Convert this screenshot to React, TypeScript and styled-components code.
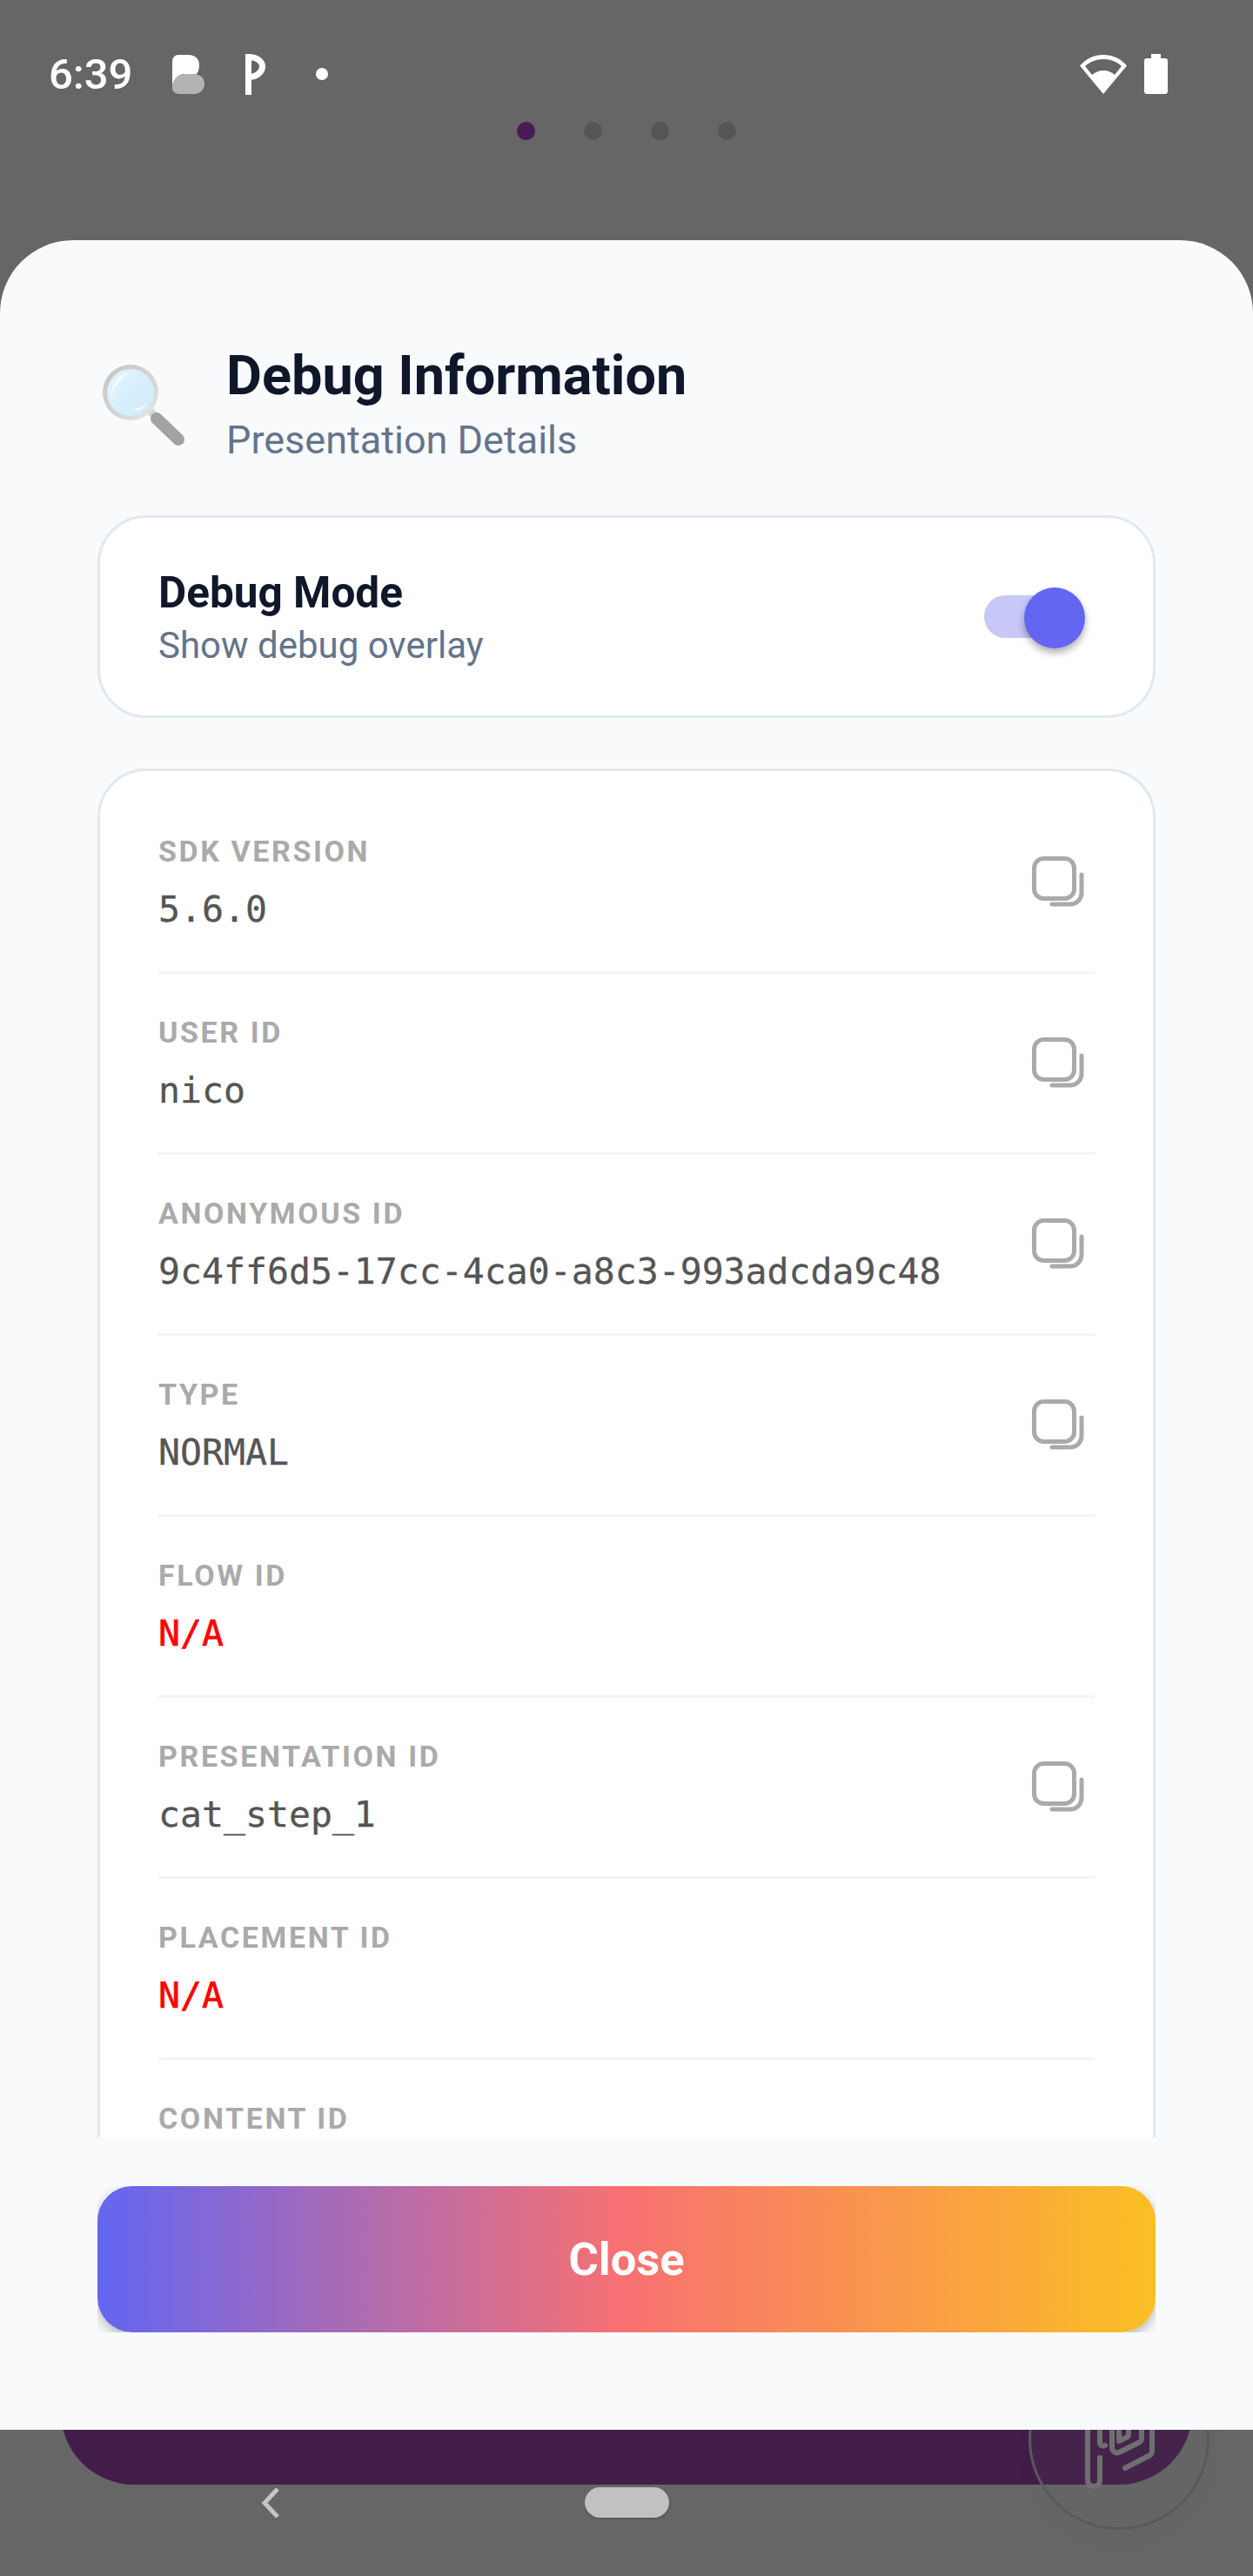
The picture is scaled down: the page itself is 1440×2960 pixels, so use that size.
import styled, { createGlobalStyle } from "styled-components";

const GlobalStyle = createGlobalStyle`
  html, body {
    margin: 0;
    padding: 0;
    background: #666666;
    font-family: Roboto, "Liberation Sans", sans-serif;
  }
`;

const Screen = styled.div`
  position: relative;
  display: flex;
  flex-direction: column;
  width: 1440px;
  height: 2960px;
  background: #666666;
  overflow: hidden;
`;

const StatusBar = styled.div`
  display: flex;
  align-items: center;
  justify-content: space-between;
  height: 60px;
  padding: 55px 98px 0 56px;
`;

const StatusLeft = styled.div`
  display: flex;
  align-items: center;
`;

const Clock = styled.span`
  width: 142px;
  font-size: 49px;
  font-weight: 500;
  color: #ffffff;
`;

const StatusDot = styled.span`
  width: 14px;
  height: 14px;
  margin-left: 58px;
  border-radius: 50%;
  background: #ffffff;
`;

const ParkingSlot = styled.span`
  display: flex;
  margin-left: 47px;
`;

const StatusRight = styled.div`
  display: flex;
  align-items: center;
  gap: 20px;
`;

const PagerDots = styled.div`
  display: flex;
  justify-content: center;
  gap: 56px;
  margin-top: 25px;
  padding-right: 1px;
`;

const PagerDot = styled.span<{ $active?: boolean }>`
  width: 21px;
  height: 21px;
  border-radius: 50%;
  background: ${(p) => (p.$active ? "#4a1a55" : "#555555")};
`;

const Sheet = styled.div`
  position: relative;
  z-index: 2;
  display: flex;
  flex-direction: column;
  height: 2516px;
  margin-top: 115px;
  padding: 0 112px;
  background: #f8fafc;
  border-radius: 84px 84px 0 0;
  box-sizing: border-box;
`;

const Header = styled.div`
  display: flex;
  align-items: center;
  margin-top: 120px;
`;

const HeaderIcon = styled.div`
  display: flex;
  width: 142px;
  padding: 6px 0 0 6px;
`;

const Title = styled.div`
  font-size: 63px;
  font-weight: 700;
  line-height: 72px;
  color: #0f172a;
`;

const Subtitle = styled.div`
  margin-top: 12px;
  font-size: 45px;
  line-height: 52px;
  color: #64748b;
`;

const Card = styled.div`
  background: #ffffff;
  border: 3px solid #e2e8f0;
  border-radius: 56px;
`;

const ToggleCard = styled(Card)`
  display: flex;
  align-items: center;
  justify-content: space-between;
  height: 233px;
  margin-top: 60px;
  padding: 0 86px 0 67px;
  box-sizing: border-box;
`;

const ToggleText = styled.div`
  padding-top: 5px;
`;

const ToggleTitle = styled.div`
  font-size: 49.5px;
  font-weight: 700;
  line-height: 62px;
  color: #0f172a;
`;

const ToggleHint = styled.div`
  font-size: 42px;
  line-height: 60px;
  color: #64748b;
`;

const Switch = styled.div`
  position: relative;
  width: 108px;
  height: 49px;
  border-radius: 25px;
  background: #c7c8f8;
`;

const SwitchThumb = styled.span`
  position: absolute;
  top: -9px;
  right: -8px;
  width: 70px;
  height: 70px;
  border-radius: 50%;
  background: #6366f1;
  box-shadow: 0 5px 9px rgba(0, 0, 0, 0.32);
`;

const ListClip = styled.div`
  flex: 1;
  min-height: 0;
  margin-top: 58px;
  overflow: hidden;
`;

const ListCard = styled(Card)`
  padding: 25px 67px 0;
`;

const Row = styled.div`
  display: flex;
  align-items: center;
  justify-content: space-between;
  height: 208px;
  border-bottom: 3px solid #f1f5f9;
  box-sizing: border-box;
`;

const RowText = styled.div`
  padding-bottom: 2px;
`;

const RowLabel = styled.div`
  font-size: 34px;
  font-weight: 700;
  line-height: 44px;
  letter-spacing: 2.6px;
  color: #aaaaaa;
`;

const RowValue = styled.div<{ $missing?: boolean }>`
  margin-top: 20px;
  font-family: "DejaVu Sans Mono", "Liberation Mono", monospace;
  font-size: 41.5px;
  line-height: 50px;
  color: ${(p) => (p.$missing ? "#ff0000" : "#555555")};
  -webkit-text-stroke: ${(p) => (p.$missing ? "0.6px #ff0000" : "0.3px #555555")};
`;

const CopyButton = styled.div`
  display: flex;
  margin-right: 12px;
`;

const Footer = styled.div`
  height: 336px;
  padding-top: 56px;
  box-sizing: border-box;
`;

const CloseClip = styled.div`
  height: 168px;
  overflow: hidden;
`;

const CloseButton = styled.div`
  display: flex;
  align-items: center;
  justify-content: center;
  height: 168px;
  border-radius: 40px;
  background: linear-gradient(90deg, #6366f1 0%, #f87171 50%, #fbbf24 100%);
  box-shadow: 0 5px 14px rgba(0, 0, 0, 0.28);
  font-size: 52.5px;
  font-weight: 700;
  color: #ffffff;
`;

const PeekBar = styled.div`
  height: 103px;
  margin: -40px 70px 0;
  background: #421d4a;
  border-radius: 0 0 84px 84px;
`;

const NavBar = styled.div`
  position: relative;
  display: flex;
  justify-content: center;
  padding-top: 3px;
`;

const NavBack = styled.div`
  position: absolute;
  top: 4px;
  left: 299px;
  display: flex;
`;

const NavPill = styled.div`
  width: 97px;
  height: 35px;
  border-radius: 18px;
  background: #c1c1c1;
  box-shadow: 0 1px 3px rgba(0, 0, 0, 0.25);
`;

const Fan = styled.div`
  position: absolute;
  z-index: 1;
  left: 1182px;
  top: 2699px;
  width: 208px;
  height: 208px;
  border: 3px solid #5a5a5a;
  border-radius: 50%;
  box-sizing: border-box;
  background: rgba(102, 102, 102, 0.1);
  box-shadow: 0 14px 30px rgba(0, 0, 0, 0.02);
`;

const FanLogo = styled.svg`
  display: block;
`;

const CopyIcon = () => (
  <svg width="60" height="60" viewBox="0 0 60 60" fill="none" stroke="#aaaaaa" strokeWidth="5" strokeLinecap="round">
    <rect x="2.5" y="2.500" width="46" height="46" rx="11" />
    <path d="M57 21v21a13 13 0 0 1-13 13H23" />
  </svg>
);

const Magnifier = () => (
  <svg width="96" height="96" viewBox="0 0 96 96" fill="none">
    <defs>
      <linearGradient id="lens" x1="0" y1="0" x2="1" y2="1">
        <stop offset="0" stopColor="#e3f4fc" />
        <stop offset="1" stopColor="#cdebf9" />
      </linearGradient>
      <linearGradient id="rim" x1="0" y1="0" x2="1" y2="1">
        <stop offset="0" stopColor="#c4c4c4" />
        <stop offset="0.6" stopColor="#d6d6d6" />
        <stop offset="1" stopColor="#e8e8e8" />
      </linearGradient>
    </defs>
    <path d="M53 52l7 7" stroke="#d5d5d5" strokeWidth="9" />
    <path d="M62 62l25 24" stroke="#a3a3a3" strokeWidth="14" strokeLinecap="round" />
    <circle cx="32" cy="32" r="32" fill="url(#rim)" />
    <circle cx="32" cy="32" r="27" fill="url(#lens)" />
    <path d="M10 37C8 23 18 10 31 9c-9 5-16 15-21 28z" fill="#f2fafe" />
    <path d="M36 51c6-1 11-3 15-8-2 6-7 10-13 10z" fill="#f2fafe" />
  </svg>
);

const ThemeGlyph = () => (
  <svg width="37" height="45" viewBox="0 0 37 45">
    <path d="M0 38V7a7 7 0 0 1 7-7h11c9 0 13 5 13 12 0 4-1 7-3 10H14c-8 0-14 8-14 16z" fill="#ffffff" />
    <path d="M0 38c0-8 5-15 14-16h11c7 0 12 5 12 11 0 7-5 12-12 12H8c-5 0-8-3-8-7z" fill="#b3b3b3" />
  </svg>
);

const ParkingGlyph = () => (
  <svg width="23" height="47" viewBox="0 0 23 47" fill="none" stroke="#ffffff" strokeWidth="7">
    <path d="M3.500 0v47M3.500 3.500c10 0 16 5 16 11s-6 12-16 12" />
  </svg>
);

const WifiGlyph = () => (
  <svg width="54" height="45" viewBox="0 0 54 45">
    <path d="M27 45L0 12.5C7 4.500 16.500 0 27 0s20 4.500 27 12.500z" fill="#ffffff" />
    <path d="M27 5c-8 0-15.500 3-21 8l8 10c3.500-3 8-5 13-5s9.500 2 13 5l8-10c-5.500-5-13-8-21-8z" fill="#666666" />
  </svg>
);

const BatteryGlyph = () => (
  <svg width="27" height="46" viewBox="0 0 27 46">
    <path d="M8 0h11v5h5a3 3 0 0 1 3 3v35a3 3 0 0 1-3 3H3a3 3 0 0 1-3-3V8a3 3 0 0 1 3-3h5z" fill="#ffffff" />
  </svg>
);

const rows = [
  { label: "SDK VERSION", value: "5.6.0", copy: true },
  { label: "USER ID", value: "nico", copy: true },
  { label: "ANONYMOUS ID", value: "9c4ff6d5-17cc-4ca0-a8c3-993adcda9c48", copy: true },
  { label: "TYPE", value: "NORMAL", copy: true },
  { label: "FLOW ID", value: "N/A", copy: false },
  { label: "PRESENTATION ID", value: "cat_step_1", copy: true },
  { label: "PLACEMENT ID", value: "N/A", copy: false },
  { label: "CONTENT ID", value: "N/A", copy: false },
];

const App = () => {
  return (
    <Screen>
      <GlobalStyle />
      <StatusBar>
        <StatusLeft>
          <Clock>6:39</Clock>
          <ThemeGlyph />
          <ParkingSlot>
            <ParkingGlyph />
          </ParkingSlot>
          <StatusDot />
        </StatusLeft>
        <StatusRight>
          <WifiGlyph />
          <BatteryGlyph />
        </StatusRight>
      </StatusBar>
      <PagerDots>
        <PagerDot $active />
        <PagerDot />
        <PagerDot />
        <PagerDot />
      </PagerDots>
      <Sheet>
        <Header>
          <HeaderIcon>
            <Magnifier />
          </HeaderIcon>
          <div>
            <Title>Debug Information</Title>
            <Subtitle>Presentation Details</Subtitle>
          </div>
        </Header>
        <ToggleCard>
          <ToggleText>
            <ToggleTitle>Debug Mode</ToggleTitle>
            <ToggleHint>Show debug overlay</ToggleHint>
          </ToggleText>
          <Switch>
            <SwitchThumb />
          </Switch>
        </ToggleCard>
        <ListClip>
          <ListCard>
            {rows.map((row) => (
              <Row key={row.label}>
                <RowText>
                  <RowLabel>{row.label}</RowLabel>
                  <RowValue $missing={row.value === "N/A"}>{row.value}</RowValue>
                </RowText>
                {row.copy && (
                  <CopyButton>
                    <CopyIcon />
                  </CopyButton>
                )}
              </Row>
            ))}
          </ListCard>
        </ListClip>
        <Footer>
          <CloseClip>
            <CloseButton>Close</CloseButton>
          </CloseClip>
        </Footer>
      </Sheet>
      <PeekBar />
      <NavBar>
        <NavBack>
          <svg width="24" height="34" viewBox="0 0 24 34" fill="none" stroke="#c6c6c6" strokeWidth="5">
            <path d="M20 1L5 17l15 16" />
          </svg>
        </NavBack>
        <NavPill />
      </NavBar>
      <Fan>
        <FanLogo width="202" height="202" viewBox="1185 2702 202 202" fill="none" stroke="#6f6f6f" strokeWidth="6" strokeLinecap="round" strokeLinejoin="round">
          <path d="M1250 2780v70a7 7 0 0 0 14 0v-26" />
          <path d="M1264 2780v27a4 4 0 0 0 6 3" />
          <path d="M1278 2780v33a6 6 0 0 0 8 5l24-12a4 4 0 0 0 2-3v-23" />
          <path d="M1286 2780v25l10-5a4 4 0 0 0 1-3v-17" />
          <path d="M1293 2836l27-14a6 6 0 0 0 4-6v-36" />
        </FanLogo>
      </Fan>
    </Screen>
  );
};

export default App;
